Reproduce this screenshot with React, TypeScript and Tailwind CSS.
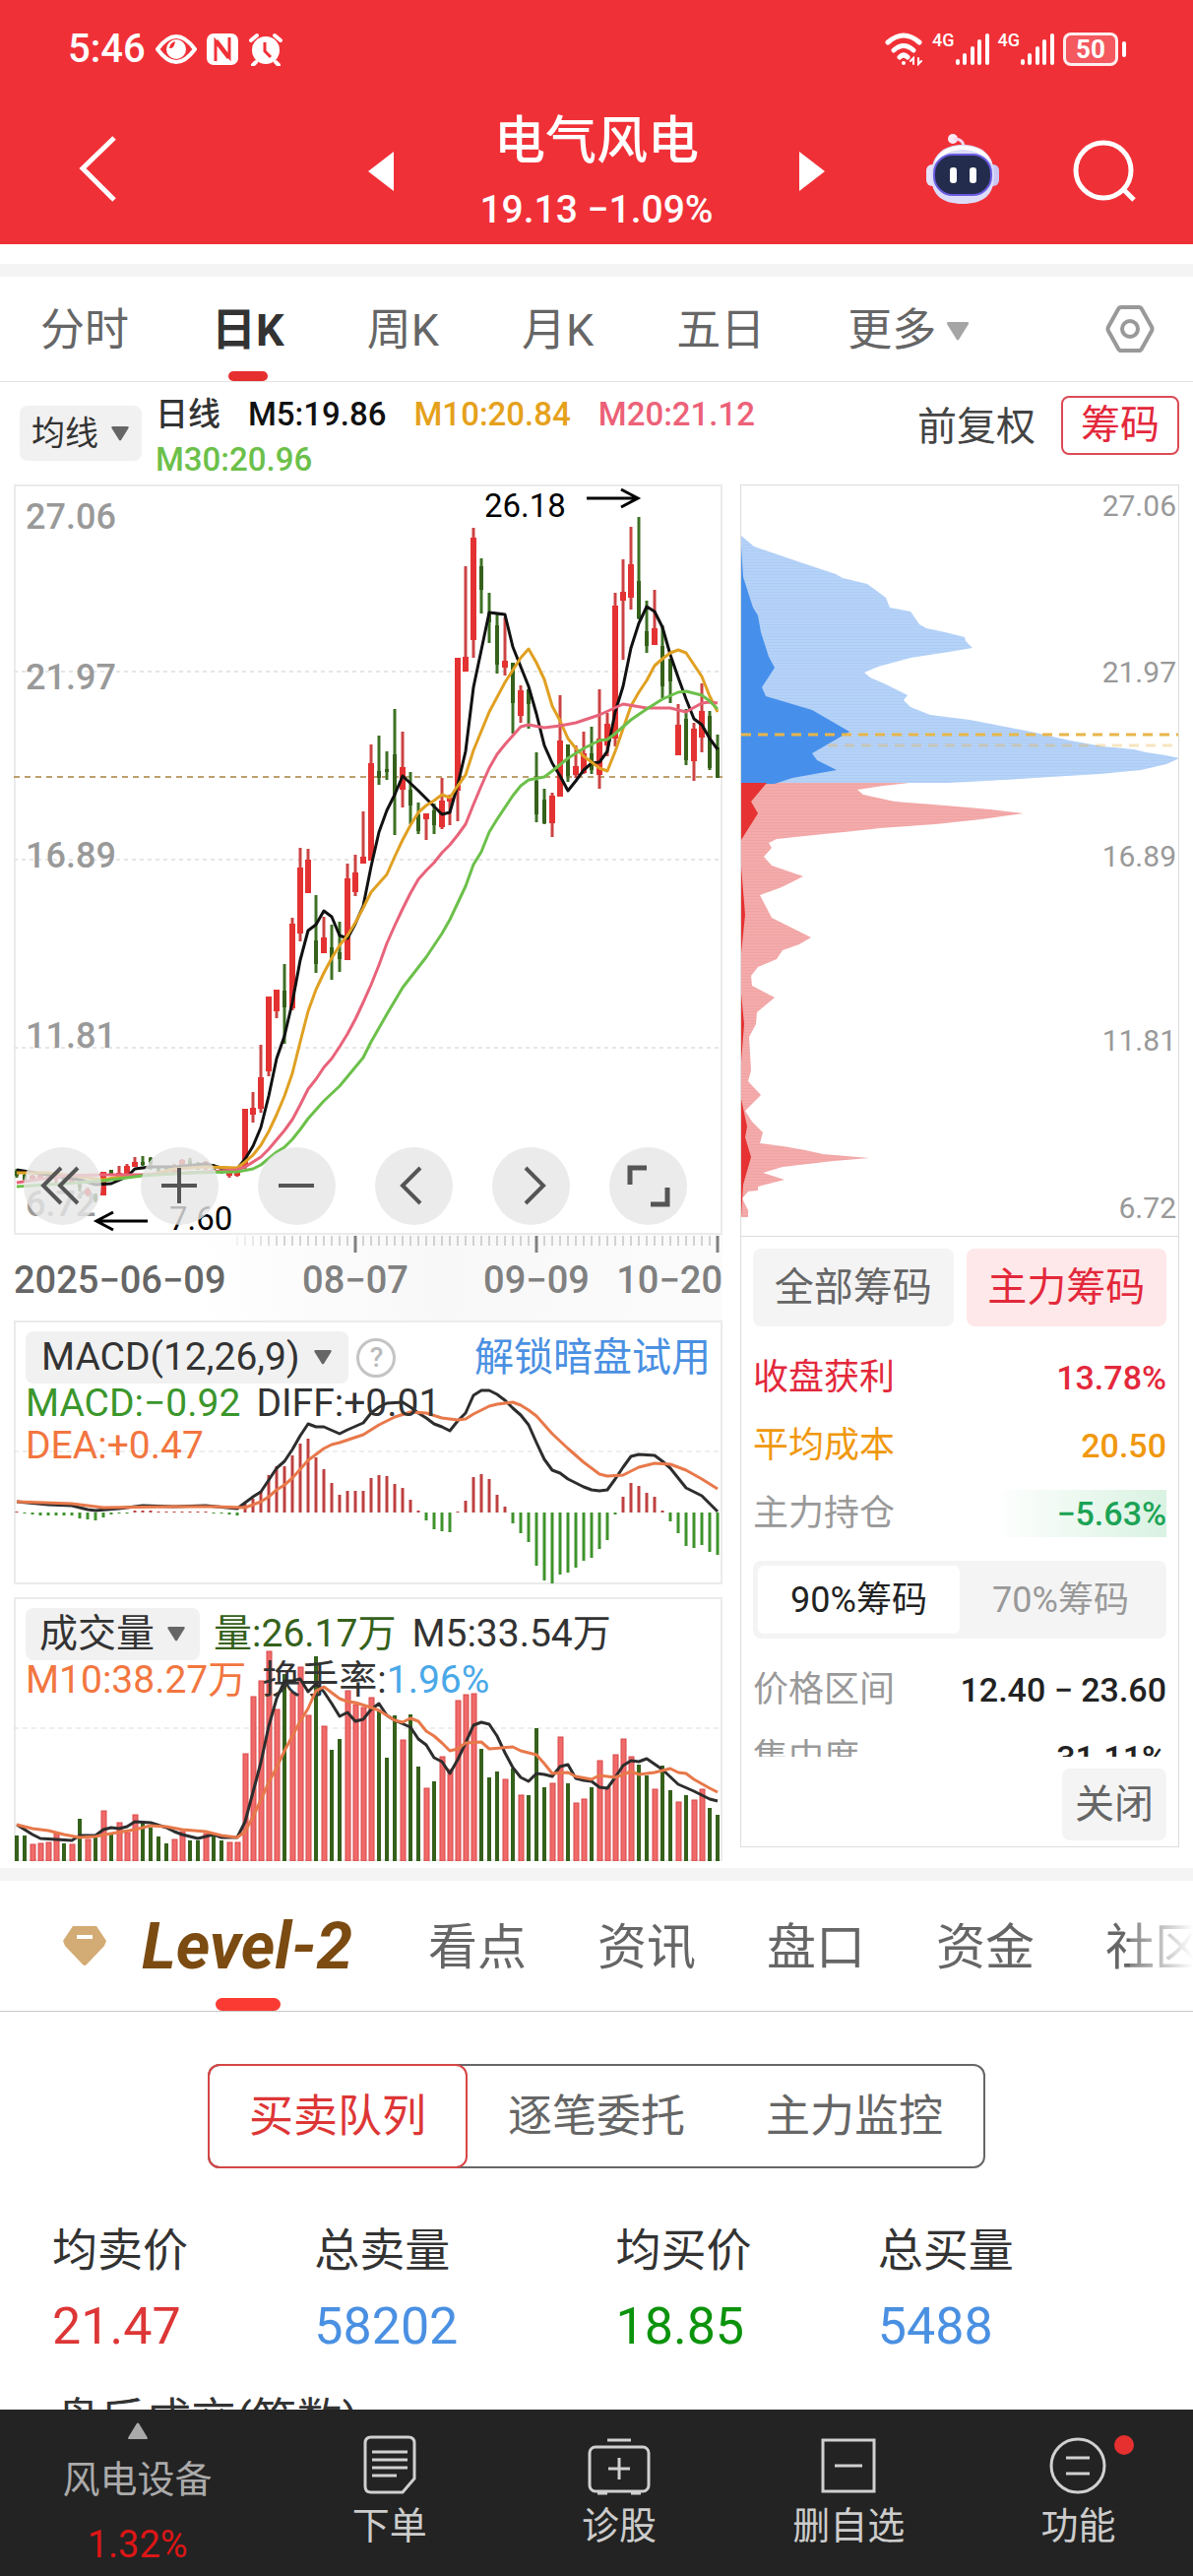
import type { ReactNode } from 'react';

type Tone = 'r' | 'g';
type Candle = [high: number, top: number, bottom: number, low: number];
type Point = [x: number, y: number];

const STEP = 8;
const FIRST = 3;

// r = up day, g = down day
const tones = 'ggrrrrgrgrgrgrrrggggrrggrggrrrrrrrgrrrgrggrrrrgggrggrgrrrrrgggrgrgggrrgrrgrrrrrggrggrgrrgg'.split('') as Tone[];

const candles: Candle[] = [
  [695, 697, 702, 704], [700, 701, 706, 709], [701, 702, 705, 706], [700, 701, 706, 707], [701, 703, 706, 708],
  [700, 702, 705, 709], [702, 704, 707, 709], [703, 704, 708, 710], [706, 708, 714, 718], [714, 716, 721, 723],
  [720, 721, 727, 729], [698, 698, 722, 722], [696, 696, 700, 701], [692, 699, 701, 702], [690, 692, 700, 701],
  [683, 688, 693, 693], [682, 688, 691, 692], [683, 684, 690, 696], [693, 694, 697, 698], [692, 694, 697, 699],
  [690, 694, 699, 700], [685, 686, 694, 696], [684, 687, 692, 693], [688, 690, 694, 696], [687, 688, 694, 696],
  [690, 693, 698, 700], [693, 694, 698, 700], [697, 699, 702, 704], [695, 697, 702, 703], [634, 634, 693, 695],
  [617, 633, 640, 648], [569, 602, 634, 638], [520, 520, 596, 601], [513, 513, 535, 542], [487, 514, 531, 568],
  [440, 446, 532, 534], [369, 389, 456, 464], [370, 381, 415, 415], [417, 463, 487, 496], [439, 460, 476, 476],
  [447, 470, 481, 503], [444, 475, 482, 495], [385, 400, 483, 483], [376, 394, 414, 418], [332, 378, 385, 385],
  [264, 283, 382, 382], [255, 291, 298, 305], [271, 289, 292, 300], [228, 274, 315, 356], [251, 287, 310, 328],
  [292, 310, 326, 345], [323, 335, 352, 355], [334, 334, 340, 361], [324, 331, 346, 355], [298, 321, 348, 350],
  [315, 318, 322, 346], [176, 176, 311, 342], [83, 175, 190, 190], [44, 54, 158, 176], [75, 83, 107, 131],
  [110, 131, 140, 161], [132, 143, 183, 192], [135, 179, 186, 194], [181, 181, 222, 253], [204, 209, 235, 242],
  [208, 208, 223, 248], [272, 301, 335, 343], [309, 320, 344, 345], [313, 316, 344, 358], [214, 260, 317, 317],
  [264, 264, 296, 302], [265, 286, 295, 298], [251, 273, 293, 294], [246, 273, 290, 294], [208, 258, 295, 309],
  [232, 243, 265, 276], [110, 123, 258, 266], [76, 109, 118, 178], [43, 81, 115, 127], [33, 98, 136, 137],
  [118, 149, 164, 171], [107, 146, 163, 163], [143, 164, 205, 217], [177, 177, 200, 222], [223, 244, 275, 275],
  [228, 238, 280, 285], [242, 248, 281, 301], [202, 230, 257, 272], [230, 235, 288, 290], [254, 267, 298, 298],
];

// Line data: [day index, y]
const ma5: Point[] = [
  [0, 696], [4, 701], [8, 706], [10, 711], [12, 710], [14, 703], [15, 695], [17, 693], [20, 693], [24, 690], [26, 694], [28, 695],
  [29, 685], [30, 672], [31, 653], [32, 621], [33, 583], [34, 560], [35, 526], [36, 483], [37, 453], [38, 447], [39, 433], [40, 439],
  [41, 458], [42, 461], [43, 446], [44, 428], [45, 388], [46, 353], [47, 331], [48, 315], [49, 296], [51, 311], [52, 319], [53, 327],
  [54, 335], [55, 333], [56, 305], [57, 271], [58, 206], [59, 168], [60, 130], [62, 132], [63, 165], [64, 185], [65, 205], [66, 233],
  [67, 265], [68, 283], [69, 296], [70, 311], [71, 301], [72, 290], [73, 283], [74, 282], [75, 271], [76, 231], [77, 205], [78, 166],
  [79, 141], [80, 124], [81, 129], [82, 145], [83, 173], [84, 196], [85, 218], [86, 238], [87, 244], [88, 258], [89, 269],
];
const ma10: Point[] = [
  [0, 699], [4, 699], [8, 703], [11, 706], [14, 702], [17, 701], [20, 695], [24, 693], [28, 694], [29, 688], [30, 681], [31, 671],
  [32, 657], [33, 640], [34, 621], [35, 598], [36, 566], [37, 535], [38, 513], [39, 496], [40, 481], [41, 468], [42, 458], [43, 445],
  [44, 430], [45, 414], [46, 405], [47, 396], [48, 378], [49, 361], [50, 346], [51, 333], [52, 326], [53, 321], [54, 315], [55, 318],
  [56, 306], [57, 295], [58, 270], [60, 231], [62, 201], [64, 176], [65, 167], [66, 181], [67, 198], [68, 225], [69, 240], [70, 258],
  [71, 268], [72, 276], [74, 288], [75, 291], [76, 271], [77, 248], [78, 225], [79, 211], [80, 199], [81, 184], [82, 177], [83, 171],
  [84, 168], [85, 171], [86, 183], [87, 195], [88, 215], [89, 231],
];
const ma20: Point[] = [
  [0, 709], [6, 702], [11, 701], [16, 701], [22, 699], [28, 696], [29, 693], [31, 683], [32, 675], [34, 656], [35, 645], [36, 630],
  [37, 614], [38, 604], [39, 592], [40, 583], [41, 571], [42, 558], [43, 543], [44, 526], [45, 508], [46, 488], [47, 466], [48, 448],
  [49, 431], [50, 415], [51, 401], [52, 392], [53, 384], [54, 374], [55, 366], [56, 356], [57, 345], [58, 325], [59, 306], [60, 288],
  [61, 274], [62, 264], [63, 255], [64, 246], [65, 244], [67, 247], [69, 245], [71, 242], [74, 234], [77, 223], [80, 227], [83, 227],
  [85, 231], [87, 222], [88, 221], [89, 222],
];
const ma30: Point[] = [
  [0, 713], [6, 710], [11, 707], [16, 702], [22, 699], [28, 698], [30, 695], [31, 691], [33, 678], [34, 673], [35, 665], [36, 655],
  [37, 644], [39, 626], [41, 611], [44, 582], [45, 566], [47, 538], [49, 511], [52, 480], [54, 456], [55, 442], [56, 425], [57, 408],
  [58, 386], [59, 373], [60, 353], [61, 340], [63, 316], [64, 306], [65, 300], [67, 297], [68, 291], [70, 278], [72, 268], [74, 260],
  [75, 259], [76, 253], [78, 239], [80, 228], [82, 218], [84, 211], [85, 210], [87, 214], [88, 220], [89, 228],
];

const macdBars = [
  1, -1, -2, -3, -3, -3, -3, -3, -6, -7, -8, -5, -2, -1, -1, 2, 2, 2, 1, 1, 1, 1, 1, 1, 1, -1, -1, -2, -3, 9,
  14, 22, 38, 47, 47, 58, 70, 75, 56, 44, 30, 18, 22, 22, 22, 35, 38, 37, 29, 25, 13, 2, -8, -17, -19, -20, 1, 12, 36, 39,
  34, 18, 6, -11, -21, -30, -54, -69, -72, -63, -61, -56, -49, -46, -37, -28, -2, 16, 30, 27, 20, 16, 2, -9, -21, -34, -36, -33, -40, -43,
];
const diff: Point[] = [
  [0, 184], [4, 187], [7, 188], [9, 192], [10, 193], [13, 191], [16, 188], [20, 189], [24, 188], [28, 191], [29, 185], [30, 179],
  [31, 174], [32, 162], [33, 150], [34, 143], [35, 131], [36, 117], [37, 105], [38, 108], [39, 108], [41, 115], [42, 111], [44, 104],
  [45, 94], [46, 88], [47, 84], [49, 83], [50, 88], [51, 94], [52, 99], [53, 105], [54, 108], [55, 112], [56, 102], [57, 94],
  [58, 76], [59, 71], [60, 71], [61, 75], [62, 81], [63, 89], [64, 96], [65, 106], [66, 124], [67, 141], [68, 152], [69, 155],
  [70, 161], [72, 169], [73, 172], [74, 173], [75, 172], [76, 161], [77, 149], [78, 138], [79, 136], [81, 137], [82, 143], [83, 150],
  [84, 160], [85, 170], [87, 178], [88, 186], [89, 194],
];
const dea: Point[] = [
  [0, 184], [7, 186], [11, 190], [20, 189], [25, 189], [29, 190], [30, 187], [31, 184], [32, 179], [33, 172], [34, 167], [35, 160],
  [36, 151], [37, 142], [38, 136], [39, 130], [40, 126], [41, 124], [44, 116], [46, 106], [48, 98], [50, 93], [52, 94], [54, 99],
  [56, 101], [57, 100], [58, 95], [60, 87], [61, 85], [63, 83], [64, 86], [65, 91], [66, 97], [68, 115], [70, 130], [72, 144],
  [74, 156], [75, 158], [77, 157], [79, 149], [81, 145], [83, 146], [85, 152], [87, 161], [88, 166], [89, 171],
];

const volumes = [
  26, 26, 17, 18, 19, 28, 18, 17, 43, 22, 25, 51, 28, 39, 29, 47, 41, 34, 25, 18, 22, 30, 21, 21, 28, 27, 21, 19, 19, 109,
  167, 183, 213, 154, 190, 171, 197, 148, 208, 137, 113, 124, 173, 159, 156, 166, 154, 105, 148, 123, 149, 96, 74, 81, 106, 93, 163, 169, 170, 114,
  85, 91, 83, 94, 67, 67, 135, 75, 79, 126, 79, 59, 63, 75, 102, 75, 108, 124, 106, 98, 87, 73, 97, 72, 60, 67, 62, 73, 54, 47,
];
const volume5: Point[] = [
  [0, 231], [1, 236], [2, 241], [3, 245], [5, 246], [7, 247], [8, 242], [10, 242], [11, 236], [12, 234], [13, 235], [14, 233],
  [15, 228], [17, 229], [19, 234], [20, 238], [21, 241], [23, 245], [24, 243], [25, 241], [26, 244], [28, 244], [29, 228], [30, 198],
  [31, 168], [32, 131], [33, 103], [34, 85], [35, 85], [36, 83], [37, 96], [38, 88], [39, 96], [40, 108], [41, 121], [42, 117],
  [43, 126], [44, 124], [45, 114], [46, 108], [47, 120], [48, 125], [50, 132], [51, 144], [52, 150], [53, 163], [54, 167], [55, 179],
  [56, 165], [57, 148], [58, 130], [59, 127], [60, 129], [61, 141], [62, 158], [63, 173], [64, 183], [65, 187], [66, 179], [67, 180],
  [68, 182], [69, 172], [70, 170], [71, 184], [72, 186], [73, 187], [74, 193], [75, 194], [76, 183], [77, 171], [78, 166], [79, 167],
  [80, 164], [82, 175], [84, 190], [86, 197], [87, 201], [88, 205], [89, 207],
];
const volume10: Point[] = [
  [0, 231], [2, 235], [4, 237], [6, 241], [8, 244], [10, 243], [12, 240], [15, 236], [17, 232], [19, 233], [21, 236], [24, 238],
  [26, 242], [28, 244], [29, 238], [30, 223], [31, 206], [32, 188], [33, 173], [34, 156], [35, 141], [36, 126], [37, 113], [38, 95],
  [39, 91], [40, 97], [41, 103], [42, 106], [43, 107], [45, 112], [46, 115], [48, 125], [49, 127], [50, 123], [51, 126], [52, 136],
  [53, 141], [54, 148], [55, 156], [56, 154], [57, 148], [59, 147], [60, 154], [63, 152], [64, 156], [66, 160], [67, 169], [68, 179],
  [70, 178], [71, 182], [73, 185], [74, 181], [76, 183], [78, 177], [79, 180], [81, 178], [83, 174], [84, 178], [85, 179], [86, 185],
  [88, 194], [89, 198],
];

const chips = {
  trapped:
    '0,51 13,62 57,77 96,90 103,94 128,100 147,114 151,124 172,128 181,141 188,145 207,149 227,154 228,158 235,165 211,169 172,175 139,184 125,190 131,195 147,202 169,213 165,218 172,225 192,233 232,238 263,244 294,250 334,259 367,265 399,268 411,271 431,274 445,277 432,283 406,289 364,293 314,296 249,300 210,302 0,302',
  trappedMain:
    '0,62 2,93 12,124 17,132 20,149 28,174 34,185 21,205 25,214 72,228 110,250 72,272 77,279 97,289 52,297 34,303 0,303',
  profit:
    '0,302 171,302 144,305 118,309 124,314 156,321 207,325 253,329 287,333 244,339 197,344 141,348 114,351 74,355 36,359 28,363 31,368 23,377 31,386 63,397 41,408 19,416 31,439 71,459 59,466 42,472 36,481 17,489 10,498 11,508 34,520 16,535 15,547 8,560 10,594 7,605 20,619 4,635 11,646 22,657 19,668 42,671 65,675 83,679 130,683 94,686 42,692 22,698 44,705 17,712 17,716 7,717 1,724 7,736 7,743 0,743',
  profitMain:
    '0,302 26,302 10,321 17,333 0,360 0,387 4,436 0,475 0,516 3,547 0,585 0,623 6,651 4,662 10,682 2,710 0,743',
};

const dayX = (index: number) => FIRST + index * STEP;

function Line({ points, color }: { points: Point[]; color: string }) {
  return (
    <polyline
      points={points.map(([index, y]) => `${dayX(index)},${y}`).join(' ')}
      fill="none"
      stroke={color}
      strokeWidth="3"
      strokeLinejoin="round"
    />
  );
}

function Caret({ className }: { className: string }) {
  return (
    <svg viewBox="0 0 20 16" className={className} fill="currentColor" aria-hidden="true">
      <path d="M2 0h16q2 0 1 2l-8 13q-1 1-2 0L1 2Q0 0 2 0Z" />
    </svg>
  );
}

function SignalIcon() {
  return (
    <div className="flex items-start">
      <span className="text-[18px] leading-4 font-medium">4G</span>
      <svg viewBox="0 0 36 34" className="h-[34px] w-9" fill="none" stroke="#fff" strokeWidth="4" strokeLinecap="round" aria-hidden="true">
        <path d="M3 31v-2M10 31v-8M18 31V16M25 31V9M33 31V3" />
      </svg>
    </div>
  );
}

function StatusBar() {
  return (
    <div className="flex h-25 items-center justify-between pr-[68px] pl-[69px]">
      <div className="flex items-center gap-2.5">
        <span className="text-[40px] leading-none font-medium">5:46</span>
        <svg viewBox="0 0 42 30" className="h-[30px] w-[42px]" aria-hidden="true">
          <path d="M2 15Q21-11 40 15Q21 41 2 15Z" fill="none" stroke="#fff" strokeWidth="4" />
          <circle cx="21" cy="15" r="10" fill="#fff" />
          <path d="M20 7a8 8 0 0 0-6 7q5 1 6-7Z" fill="#f03037" />
        </svg>
        <svg viewBox="0 0 32 32" className="size-8" aria-hidden="true">
          <rect width="32" height="32" rx="7" fill="#fff" />
          <path d="M9 28V8l13 17M23 4v20L10 7" fill="none" stroke="#f03037" strokeWidth="3" />
        </svg>
        <svg viewBox="0 0 36 34" className="h-[34px] w-9" aria-hidden="true">
          <circle cx="18" cy="18" r="14" fill="#fff" />
          <path d="M3 8l6-5M33 8l-6-5M8 30l-3 3M28 30l3 3" stroke="#fff" strokeWidth="4" strokeLinecap="round" />
          <path d="M17 10v9l6 6" fill="none" stroke="#f03037" strokeWidth="3" />
        </svg>
      </div>
      <div className="flex items-center gap-2">
        <svg viewBox="0 0 40 34" className="h-[34px] w-10" fill="none" stroke="#fff" strokeWidth="5" strokeLinecap="round" aria-hidden="true">
          <path d="M3 10q16-14 32 0M9 18q10-9 20 0M15 25q4-4 8 0" />
          <circle cx="19" cy="31" r="2" fill="#fff" stroke="none" />
          <path d="M29 32v-6l-3 3M34 26v6l3-3" strokeWidth="2" />
        </svg>
        <SignalIcon />
        <SignalIcon />
        <div className="flex items-center gap-1">
          <div className="flex h-[34px] w-14 items-center justify-center rounded-lg border-3 border-white/90 bg-white/20 text-[26px] leading-none font-bold">
            50
          </div>
          <span className="h-4 w-1 rounded bg-white" />
        </div>
      </div>
    </div>
  );
}

function RobotIcon() {
  return (
    <svg viewBox="0 0 76 72" className="h-[72px] w-[76px]" aria-hidden="true">
      <circle cx="28" cy="5" r="5" fill="#fbe9f4" />
      <path d="M29 5q11 0 10 11" fill="none" stroke="#f3d6ec" strokeWidth="3" />
      <rect x="1" y="31" width="12" height="22" rx="6" fill="#e6e2fb" />
      <rect x="63" y="31" width="12" height="22" rx="6" fill="#c9c6f3" />
      <path d="M38 11C57 11 70 21 70 42S58 71 38 71 6 63 6 42s13-31 32-31Z" fill="#dcdcf9" />
      <path d="M38 12C24 12 13 18 9 30q12-14 29-14t30 14C64 18 52 12 38 12Z" fill="#fff" />
      <rect x="9" y="21" width="58" height="41" rx="19" fill="#232c4d" stroke="#6a5be0" strokeWidth="2" />
      <rect x="25" y="34" width="7" height="16" rx="3" fill="#fff" />
      <rect x="45" y="34" width="7" height="16" rx="3" fill="#fff" />
    </svg>
  );
}

function Header() {
  return (
    <header className="bg-[#f03037] text-white">
      <StatusBar />
      <div className="grid h-37 grid-cols-[1fr_464px_1fr]">
        <button type="button" aria-label="返回" className="mt-[38px] ml-20 h-17 w-10">
          <svg viewBox="0 0 40 68" className="h-17 w-10" fill="none" stroke="#fff" strokeWidth="5">
            <path d="M36 2L4 33l32 32" />
          </svg>
        </button>
        <div className="flex items-start justify-between">
          <button type="button" aria-label="上一只" className="mt-[54px]">
            <svg viewBox="0 0 26 40" className="h-10 w-[26px]" fill="#fff">
              <path d="M26 0v40L0 20Z" />
            </svg>
          </button>
          <div className="pt-3 text-center">
            <h1 className="text-[52px] leading-[64px] font-medium">电气风电</h1>
            <p className="mt-2.5 text-[39px] leading-[54px] font-medium">19.13 −1.09%</p>
          </div>
          <button type="button" aria-label="下一只" className="mt-[54px]">
            <svg viewBox="0 0 26 40" className="h-10 w-[26px]" fill="#fff">
              <path d="M0 0v40l26-20Z" />
            </svg>
          </button>
        </div>
        <div className="flex items-start justify-end gap-[74px] pt-9 pr-[58px]">
          <button type="button" aria-label="智能助手">
            <RobotIcon />
          </button>
          <button type="button" aria-label="搜索" className="mt-1.5">
            <svg viewBox="0 0 64 64" className="size-16" fill="none" stroke="#fff" strokeWidth="5">
              <circle cx="31" cy="31" r="28" />
              <path d="M51 50l11 11" />
            </svg>
          </button>
        </div>
      </div>
    </header>
  );
}

function PeriodTabs() {
  return (
    <nav className="flex h-[107px] items-center justify-between border-b border-[#e2e2e2] pr-[39px] pl-[41px] text-[45px] text-[#666]">
      <div className="flex h-full items-center gap-[84px] pt-1">
        <button type="button">分时</button>
        <button type="button" className="relative h-full font-bold text-[#333]">
          日K
          <span className="absolute bottom-0 left-1/2 h-2.5 w-10 -translate-x-1/2 rounded-full bg-[#e6302f]" />
        </button>
        <button type="button">周K</button>
        <button type="button">月K</button>
        <button type="button">五日</button>
        <button type="button" className="flex items-center gap-2.5">
          更多
          <Caret className="h-[19px] w-6 text-[#a5a5a5]" />
        </button>
      </div>
      <button type="button" aria-label="设置">
        <svg viewBox="0 0 50 48" className="h-12 w-[50px]" fill="none" stroke="#999" strokeWidth="4">
          <path d="M16 2h18q2 0 3 2l10 18q1 2 0 4L37 44q-1 2-3 2H16q-2 0-3-2L3 26q-1-2 0-4L13 4q1-2 3-2Z" />
          <circle cx="25" cy="24" r="8" />
        </svg>
      </button>
    </nav>
  );
}

function IndicatorBar() {
  return (
    <div className="flex h-[104px] items-start justify-between pt-3 pr-3.5 pl-5">
      <div className="flex items-start gap-3.5">
        <button type="button" className="mt-3 flex h-14 shrink-0 items-center gap-3 rounded-lg bg-[#f1f1f1] px-3 text-[34px] text-[#333]">
          均线
          <Caret className="h-[15px] w-5 text-[#666]" />
        </button>
        <div className="-mt-0.5 flex w-[640px] flex-wrap gap-x-7 text-[33px] leading-[46px] font-medium">
          <span className="text-[#333]">日线</span>
          <span className="text-[#111]">M5:19.86</span>
          <span className="text-[#e5a11b]">M10:20.84</span>
          <span className="text-[#ec6178]">M20:21.12</span>
          <span className="text-[#6cc04a]">M30:20.96</span>
        </div>
      </div>
      <div className="flex items-center gap-[26px] text-[40px] leading-none">
        <button type="button" className="pt-1.5 text-[#444]">前复权</button>
        <button type="button" className="mt-0.5 h-15 w-30 rounded-lg border-2 border-[#dc4a55] text-[#e3283b]">筹码</button>
      </div>
    </div>
  );
}

const priceLabels: Array<[string, number]> = [
  ['27.06', 45],
  ['21.97', 208],
  ['16.89', 389],
  ['11.81', 572],
  ['6.72', 743],
];

function RoundButton({ label, children }: { label: string; children: ReactNode }) {
  return (
    <button type="button" aria-label={label} className="size-[79px] rounded-full bg-[#e6e6e6]/80">
      <svg viewBox="0 0 79 79" fill="none" stroke="#555" strokeWidth="4">
        {children}
      </svg>
    </button>
  );
}

function PriceChart() {
  return (
    <div className="relative">
      <svg viewBox="0 0 720 762" className="block w-full">
        <rect x="1" y="1" width="718" height="760" fill="#fff" stroke="#ebebeb" strokeWidth="2" />
        <path d="M0 190h720M0 381h720M0 572h720" stroke="#e6e6e6" strokeWidth="2" strokeDasharray="4 4" />
        <path d="M0 297h720" stroke="#bd9f6c" strokeWidth="2" strokeDasharray="6 5" />
        <g fill="#999" fontSize="36" fontWeight="500">
          {priceLabels.map(([text, y]) => (
            <text key={text} x="12" y={y}>{text}</text>
          ))}
        </g>
        {candles.map(([high, top, bottom, low], index) => {
          const up = tones[index] === 'r';
          const x = dayX(index);
          const width = up ? 6 : 4;

          return (
            <g key={index}>
              <path d={`M${x} ${high}V${low}`} stroke={up ? '#cc4343' : '#3d7024'} strokeWidth="3" />
              <rect x={x - width / 2} y={top} width={width} height={Math.max(2, bottom - top)} fill={up ? '#e43232' : '#35611b'} />
            </g>
          );
        })}
        <Line points={ma5} color="#111" />
        <Line points={ma10} color="#e0a022" />
        <Line points={ma20} color="#e8637a" />
        <Line points={ma30} color="#6cc04a" />
        <g fill="#000" fontSize="33">
          <text x="478" y="33">26.18</text>
          <text x="158" y="757">7.60</text>
        </g>
        <path d="M582 14h52M617 5l17 9-17 9M136 748H84M101 739l-17 9 17 9" fill="none" stroke="#000" strokeWidth="3" />
      </svg>
      <div className="absolute bottom-2.5 left-2.5 flex gap-10">
        <RoundButton label="最早">
          <path d="M38 21L20 39l18 18M55 21L37 39l18 18" />
        </RoundButton>
        <RoundButton label="放大">
          <path d="M39 21v36M21 39h36" />
        </RoundButton>
        <RoundButton label="缩小">
          <path d="M21 39h36" />
        </RoundButton>
        <RoundButton label="向左">
          <path d="M46 21L28 39l18 18" />
        </RoundButton>
        <RoundButton label="向右">
          <path d="M34 21l18 18-18 18" />
        </RoundButton>
        <RoundButton label="全屏">
          <path d="M21 38V21h17M59 41v17H42" strokeWidth="5" />
        </RoundButton>
      </div>
    </div>
  );
}

function DateAxis() {
  return (
    <svg viewBox="0 0 720 87" className="block w-full">
      <defs>
        <linearGradient id="axis-shade">
          <stop offset="0.25" stopColor="#fff" />
          <stop offset="0.6" stopColor="#f8f8f8" />
          <stop offset="1" stopColor="#fbfbfb" />
        </linearGradient>
      </defs>
      <rect width="720" height="87" fill="url(#axis-shade)" />
      {Array.from({ length: 62 }, (_, tick) => {
        const index = tick + 28;
        const major = index === 43 || index === 66 || index === 89;

        return (
          <path
            key={index}
            d={`M${dayX(index)} 1v${major ? 17 : 10}`}
            stroke={major ? '#808080' : '#aaa'}
            strokeWidth={major ? 3 : 1}
            opacity={Math.min(1, (tick + 2) / 8)}
          />
        );
      })}
      <g fill="#808080" fontSize="38" fontWeight="500">
        <text x="0" y="59" fill="#666">2025−06−09</text>
        <text x="347" y="59" textAnchor="middle">08−07</text>
        <text x="531" y="59" textAnchor="middle">09−09</text>
        <text x="720" y="59" textAnchor="end">10−20</text>
      </g>
    </svg>
  );
}

function MacdChart() {
  return (
    <section className="relative text-[39px] leading-[43px]">
      <svg viewBox="0 0 720 268" className="block w-full">
        <rect x="1" y="1" width="718" height="266" fill="#fff" stroke="#ebebeb" strokeWidth="2" />
        <path d="M0 133h720" stroke="#ddd" strokeDasharray="5 4" />
        {macdBars.map((value, index) => (
          <path
            key={index}
            d={`M${dayX(index)} 195v${-value}`}
            stroke={value > 0 ? '#bf4040' : '#3f932c'}
            strokeWidth="3"
          />
        ))}
        <Line points={diff} color="#2d2d2d" />
        <Line points={dea} color="#e8784a" />
      </svg>
      <div className="absolute inset-x-3 top-3">
        <div className="flex h-[51px] items-center justify-between">
          <div className="flex items-center gap-2">
            <button type="button" className="flex h-[53px] items-center gap-3.5 rounded-lg bg-[#f1f1f1] px-4 text-[#333]">
              MACD(12,26,9)
              <Caret className="h-[15px] w-5 text-[#666]" />
            </button>
            <button type="button" aria-label="说明" className="size-10 rounded-full border-3 border-[#c4c4c4] text-[28px] leading-none font-medium text-[#bbb]">
              ?
            </button>
          </div>
          <a href="#unlock" className="text-[40px] text-[#4a90e2]">解锁暗盘试用</a>
        </div>
        <p className="flex gap-4">
          <span className="text-[#3b962b]">MACD:−0.92</span>
          <span className="text-[#333]">DIFF:+0.01</span>
        </p>
        <p className="text-[#f2763f]">DEA:+0.47</p>
      </div>
    </section>
  );
}

function VolumeChart() {
  return (
    <section className="relative mt-[13px] text-[39px] leading-[43px]">
      <svg viewBox="0 0 720 268" className="block w-full">
        <rect x="1" y="1" width="718" height="266" fill="#fff" stroke="#ebebeb" strokeWidth="2" />
        <path d="M0 133h720" stroke="#ddd" strokeDasharray="5 4" />
        {volumes.map((volume, index) =>
          tones[index] === 'r' ? (
            <rect key={index} x={dayX(index) - 2} y={268 - volume} width="5" height={volume} fill="#f06a6a" stroke="#d94848" />
          ) : (
            <rect key={index} x={dayX(index) - 2} y={268 - volume} width="4" height={volume} fill="#35611b" />
          ),
        )}
      </svg>
      <div className="absolute inset-x-3 top-3">
        <div className="flex h-[51px] items-center">
          <button type="button" className="flex h-[53px] items-center gap-3 rounded-lg bg-[#f1f1f1] px-3.5 text-[#333]">
            成交量
            <Caret className="h-[15px] w-5 text-[#666]" />
          </button>
          <span className="ml-3.5 text-[#35611b]">量:26.17万</span>
          <span className="ml-4 text-[#333]">M5:33.54万</span>
        </div>
        <p className="flex gap-4">
          <span className="text-[#f2763f]">M10:38.27万</span>
          <span className="text-[#333]">
            换手率:<span className="text-[#4aa8e8]">1.96%</span>
          </span>
        </p>
      </div>
      <svg viewBox="0 0 720 268" className="absolute inset-0 w-full">
        <Line points={volume5} color="#2d2d2d" />
        <Line points={volume10} color="#e8784a" />
      </svg>
    </section>
  );
}

function ChipChart() {
  return (
    <svg viewBox="0 0 444 762" className="block w-full">
      <defs>
        <pattern id="chip-rows" width="4" height="3" patternUnits="userSpaceOnUse">
          <path d="M0 2h4" stroke="#fff" strokeOpacity="0.18" />
        </pattern>
      </defs>
      <polygon points={chips.trapped} fill="#aecdf6" />
      <polygon points={chips.profit} fill="#f2a3a3" />
      <polygon points={chips.trapped} fill="url(#chip-rows)" />
      <polygon points={chips.profit} fill="url(#chip-rows)" />
      <polygon points={chips.trappedMain} fill="#4690ec" />
      <polygon points={chips.profitMain} fill="#e63232" />
      <path d="M0 253h444" stroke="#e8b54a" strokeWidth="3" strokeDasharray="10 7" />
      <path d="M88 264h356" stroke="#e8b54a" strokeOpacity="0.35" strokeWidth="3" strokeDasharray="10 7" />
      <g fill="#999" fontSize="30" textAnchor="end">
        <text x="442" y="31">27.06</text>
        <text x="442" y="200">21.97</text>
        <text x="442" y="387">16.89</text>
        <text x="442" y="574">11.81</text>
        <text x="442" y="744">6.72</text>
      </g>
    </svg>
  );
}

function ChipRow({ label, children, className = 'text-[#999]' }: { label: string; children: ReactNode; className?: string }) {
  return (
    <div className={`flex h-[69px] items-center justify-between ${className}`}>
      <span className="text-[36px]">{label}</span>
      {children}
    </div>
  );
}

function ChipPanel() {
  return (
    <aside className="border border-[#ddd] leading-none">
      <ChipChart />
      <div className="border-t border-[#ddd] px-3 pt-3 pb-1.5">
        <div className="grid grid-cols-2 gap-[13px] text-[40px]">
          <button type="button" className="h-[79px] rounded-lg bg-[#f4f4f4] text-[#666]">全部筹码</button>
          <button type="button" className="h-[79px] rounded-lg bg-[#ffe8e9] text-[#e3283b]">主力筹码</button>
        </div>
        <div className="mt-[17px]">
          <ChipRow label="收盘获利" className="text-[#e3283b]">
            <span className="text-[34px] font-medium">13.78%</span>
          </ChipRow>
          <ChipRow label="平均成本" className="text-[#f0980f]">
            <span className="text-[34px] font-medium">20.50</span>
          </ChipRow>
          <ChipRow label="主力持仓">
            <span className="flex h-12 w-44 items-center justify-end bg-linear-to-r from-white to-[#d9f2e2] text-[34px] font-medium text-[#1ba355]">
              −5.63%
            </span>
          </ChipRow>
        </div>
        <div className="mt-3.5 grid h-[79px] grid-cols-2 rounded-lg bg-[#f4f4f4] p-[5px] text-[36px]">
          <button type="button" className="rounded-md bg-white text-[#222]">90%筹码</button>
          <button type="button" className="text-[#999]">70%筹码</button>
        </div>
        <div className="mt-[17px] h-[103px] overflow-hidden">
          <ChipRow label="价格区间">
            <span className="text-[34px] font-medium text-[#222]">12.40 − 23.60</span>
          </ChipRow>
          <ChipRow label="集中度">
            <span className="text-[34px] font-medium text-[#222]">31.11%</span>
          </ChipRow>
        </div>
        <div className="mt-3 flex justify-end">
          <button type="button" className="h-[73px] w-[106px] rounded-lg bg-[#f4f4f4] text-[40px] text-[#666]">关闭</button>
        </div>
      </div>
    </aside>
  );
}

function SectionTabs() {
  return (
    <nav className="relative flex h-[133px] items-center overflow-hidden border-b border-[#c8c8c8] pl-16 text-[50px] whitespace-nowrap text-[#666]">
      <svg viewBox="0 0 44 40" className="h-10 w-11 shrink-0" aria-hidden="true">
        <path d="M10 0h24l10 15-2 5-18 19q-2 2-4 0L2 20l-2-5Z" fill="#d3ab74" />
        <path d="M14 11h16" stroke="#fff" strokeWidth="4" />
      </svg>
      <button type="button" className="relative ml-9 h-full w-[218px] shrink-0 text-left text-[66px] font-bold text-[#7b4b12] italic">
        Level-2
        <span className="absolute bottom-0 left-[75px] h-[13px] w-[66px] rounded-full bg-[#fb3b33]" />
      </button>
      <div className="ml-[73px] flex gap-[72px] pt-1">
        <button type="button">看点</button>
        <button type="button">资讯</button>
        <button type="button">盘口</button>
        <button type="button">资金</button>
        <button type="button">社区</button>
      </div>
      <div className="absolute inset-y-0 right-0 w-16 bg-linear-to-r from-white/20 to-white" />
    </nav>
  );
}

const stats = [
  { label: '均卖价', value: '21.47', tone: 'text-[#dd3636]' },
  { label: '总卖量', value: '58202', tone: 'text-[#4a90e2]' },
  { label: '均买价', value: '18.85', tone: 'text-[#0c930c]' },
  { label: '总买量', value: '5488', tone: 'text-[#4a90e2]' },
];

function LevelTwo() {
  return (
    <section>
      <SectionTabs />
      <div className="mx-auto mt-[53px] grid h-[106px] w-[790px] grid-cols-3 rounded-xl border-2 border-[#666] text-[45px] text-[#666]">
        <button type="button" className="-my-0.5 -ml-0.5 rounded-xl border-2 border-[#d64545] pt-0.5 text-[#dd3636]">买卖队列</button>
        <button type="button" className="pt-0.5">逐笔委托</button>
        <button type="button" className="pt-0.5">主力监控</button>
      </div>
      <div className="mt-12 grid grid-cols-[266fr_306fr_266fr_320fr] pl-[53px]">
        {stats.map((stat) => (
          <div key={stat.label}>
            <p className="text-[46px] leading-[70px] text-[#333]">{stat.label}</p>
            <p className={`text-[52px] leading-[86px] ${stat.tone}`}>{stat.value}</p>
          </div>
        ))}
      </div>
      <h2 className="mt-4 pl-14 text-[46px] leading-[70px] text-[#333]">盘后成交(笔数)</h2>
    </section>
  );
}

function NavItem({ label, children }: { label: string; children: ReactNode }) {
  return (
    <button type="button" className="flex flex-[233] flex-col items-center pt-[26px] text-[38px] leading-none">
      <svg viewBox="0 0 64 60" className="h-15 w-16 overflow-visible" fill="none" stroke="#d0d0d0" strokeWidth="4">
        {children}
      </svg>
      <span className="mt-[13px]">{label}</span>
    </button>
  );
}

function BottomNav() {
  return (
    <nav className="flex h-[169px] shrink-0 bg-[#232323] text-[#ccc]">
      <button type="button" className="flex flex-[279] flex-col items-center pt-[13px] text-[38px] leading-none text-[#aaa]">
        <Caret className="h-[17px] w-[30px] rotate-180" />
        <span className="mt-[22px]">风电设备</span>
        <span className="mt-7 text-[#dd1616]">1.32%</span>
      </button>
      <NavItem label="下单">
        <path d="M13 2h38q6 0 6 6v36L45 58H13q-6 0-6-6V8q0-6 6-6Z" strokeWidth="3" />
        <path d="M14 17h36M14 25h36M14 33h36M14 41h25" strokeWidth="3" />
      </NavItem>
      <NavItem label="诊股">
        <rect x="2" y="12" width="60" height="45" rx="6" strokeWidth="3" />
        <path d="M20 5h24M10 59h10M44 59h10" strokeWidth="3" />
        <path d="M32 23v22M21 34h22" strokeWidth="3" />
      </NavItem>
      <NavItem label="删自选">
        <rect x="6" y="5" width="52" height="52" strokeWidth="3" />
        <path d="M18 31h28" strokeWidth="3" />
      </NavItem>
      <NavItem label="功能">
        <circle cx="32" cy="31" r="27" strokeWidth="3" />
        <path d="M20 23h24M20 39h24" strokeWidth="3" />
        <circle cx="79" cy="10" r="10" fill="#e6302f" stroke="none" />
      </NavItem>
    </nav>
  );
}

export default function App() {
  return (
    <div className="flex h-screen flex-col overflow-hidden bg-white font-[Roboto,'Noto_Sans_CJK_SC',sans-serif]">
      <main className="min-h-0 flex-1 overflow-hidden">
        <Header />
        <div className="mt-5 h-[13px] bg-[#f4f4f4]" />
        <PeriodTabs />
        <IndicatorBar />
        <div className="grid grid-cols-[720fr_446fr] items-start gap-[18px] px-3.5 pb-[7px]">
          <div>
            <PriceChart />
            <DateAxis />
            <MacdChart />
            <VolumeChart />
          </div>
          <ChipPanel />
        </div>
        <div className="h-[13px] bg-[#f4f4f4]" />
        <LevelTwo />
      </main>
      <BottomNav />
    </div>
  );
}
